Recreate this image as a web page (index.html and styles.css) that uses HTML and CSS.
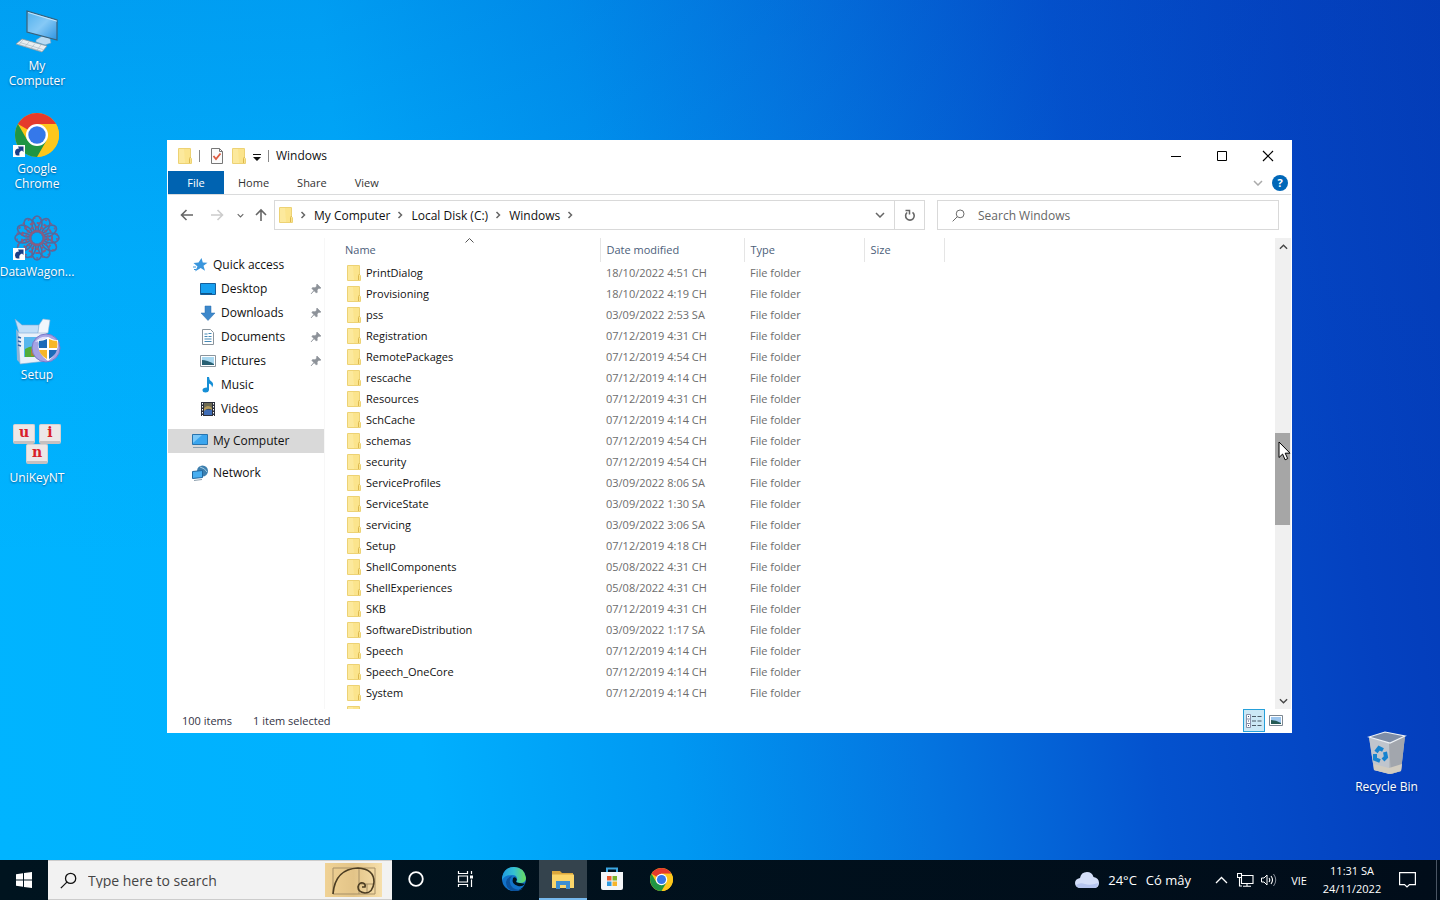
FILE: index.html
```html
<!DOCTYPE html>
<html lang="vi">
<head>
    <meta charset="utf-8" />
    <title>Windows</title>
    <link rel="stylesheet" href="styles.css">
</head>
<body>
    <!-- shared icons -->
    <svg class="sprite" aria-hidden="true">
        <symbol id="folder" viewBox="0 0 14 16">
            <path d="M1 1h12v14H1z" fill="#fbe48c" />
            <path d="M1 1h5l1 14H1z" fill="#fdeca8" opacity=".6" />
            <path d="M.5 .5h12v9l1 1v5H.5z" fill="none" stroke="#edd274" />
            <path d="M11.500 15v-4.500l1-1.500" fill="none" stroke="#dcb84e" />
        </symbol>
        <symbol id="chrome" viewBox="0 0 44 44">
            <circle cx="22" cy="22" r="22" fill="#ffc61a" />
            <path d="M22 22L2.950 11A22 22 0 0 1 41.050 11H22z" fill="#e53a2c" />
            <path d="M22 11H41.050A22 22 0 0 1 22 44L31.500 27.500z" fill="#fdc71c" />
            <path d="M2.950 11A22 22 0 0 0 22 44L31.500 27.500H12.500z" fill="#1f9543" />
            <circle cx="22" cy="22" r="11" fill="#fff" />
            <circle cx="22" cy="22" r="8.700" fill="#3578ea" />
        </symbol>
        <symbol id="shortcut" viewBox="0 0 12 12">
            <path d="M0 0h12v12H0z" fill="#fff" />
            <path d="M2 7.500Q2 3.500 6 3.500L5 1.500h5.500V7L9 5.500Q5.500 6.500 6.500 10.500H4.500Q2 10 2 7.500z" fill="#1d3f86" />
        </symbol>
        <symbol id="pin" viewBox="0 0 12 12">
            <path d="M7 1l4 4-1.200.4-.9-.2-1.800 1.800.2 2.200-.9.900-2.500-2.500L1 11l3-3.300L1.800 5.400l.9-.8 2.300.200L6.800 3l-.300-.9z" fill="#8d9299" stroke="#8d9299" stroke-width=".6" />
        </symbol>
        <symbol id="right" viewBox="0 0 6 8">
            <path d="M1.500 1l3 3-3 3" fill="none" stroke="#666" stroke-width="1.500" />
        </symbol>
        <symbol id="down" viewBox="0 0 10 6">
            <path d="M1 1l4 4 4-4" fill="none" stroke="currentColor" stroke-width="1.500" />
        </symbol>
        <symbol id="loupe" viewBox="0 0 16 16">
            <circle cx="10" cy="6" r="4.800" fill="none" stroke="currentColor" stroke-width="1.200" />
            <path d="M6.500 9.500L.8 15.200" stroke="currentColor" stroke-width="1.200" />
        </symbol>
    </svg>

    <main class="desktop">
        <div class="icons">
            <a class="icon" href="#">
                <span class="pic">
                    <svg width="44" height="44" viewBox="0 0 44 44">
                        <defs>
                            <linearGradient id="screen" x1="0" y1="0" x2="1" y2="1">
                                <stop offset="0" stop-color="#4fb0ee" />
                                <stop offset=".5" stop-color="#86c9f6" />
                                <stop offset="1" stop-color="#2c93e0" />
                            </linearGradient>
                        </defs>
                        <path d="M21 30l6-4 8 2 1 5-6 2-9-3z" fill="#b9dbf2" stroke="#6a9ac0" stroke-width=".6" />
                        <path d="M12 1l30 9v20l-30-8z" fill="url(#screen)" stroke="#3b6078" stroke-width="1.200" />
                        <path d="M13 2.500l29 8.700" stroke="#dff1fc" stroke-width=".8" />
                        <path d="M1 34l6-5 25 7-5 6z" fill="#e9eef1" stroke="#8c98a0" stroke-width=".8" />
                        <path d="M5 32.500l23 7M4 34.500l22 6.500M8 30l-4 4.500M14 32l-4 4.500M20 33.500l-4 5M26 35l-4 5" stroke="#a5b3bd" stroke-width=".6" />
                    </svg>
                </span>
                <span class="label">My<br>Computer</span>
            </a>
            <a class="icon" href="#">
                <span class="pic">
                    <svg width="44" height="44"><use href="#chrome" /></svg>
                    <svg class="arrow" width="12" height="12"><use href="#shortcut" /></svg>
                </span>
                <span class="label">Google<br>Chrome</span>
            </a>
            <a class="icon" href="#">
                <span class="pic">
                    <svg width="46" height="46" viewBox="-23 -23 46 46">
                        <g fill="none" stroke="#55689c" stroke-width="1.600">
                            <g id="petals">
                                <ellipse cx="0" cy="-14" rx="5" ry="8" />
                                <ellipse cx="14" cy="0" rx="8" ry="5" />
                                <ellipse cx="0" cy="14" rx="5" ry="8" />
                                <ellipse cx="-14" cy="0" rx="8" ry="5" />
                            </g>
                            <use href="#petals" transform="rotate(30)" />
                            <use href="#petals" transform="rotate(60)" />
                            <circle r="7" stroke="#8a5c80" stroke-width="2" />
                            <circle r="11" stroke="#8a5c80" stroke-width="2" stroke-dasharray="3 2" />
                            <circle r="15" stroke="#8a5c80" stroke-width="2" stroke-dasharray="4 3" />
                            <circle r="20" stroke="#8b5a80" stroke-dasharray="2 4" />
                        </g>
                    </svg>
                    <svg class="arrow" width="12" height="12"><use href="#shortcut" /></svg>
                </span>
                <span class="label">DataWagon...</span>
            </a>
            <a class="icon" href="#">
                <span class="pic">
                    <svg width="48" height="48" viewBox="0 0 48 48">
                        <path d="M3 12l4 5v29l-3-3z" fill="#8fb4d8" />
                        <path d="M5 15h27l4 4-2 25-27 3z" fill="#e9f1fa" stroke="#83a9d0" stroke-width=".6" />
                        <path d="M2 2l7 6h17l-1 8H6z" fill="#c2def8" stroke="#7aa6d4" stroke-width=".6" />
                        <path d="M26 8l4-6 7 1-2 13-10 0z" fill="#f2f6fc" stroke="#98b3d2" stroke-width=".6" />
                        <path d="M11 20h14v20H11z" fill="#58b7ee" />
                        <path d="M12 32q6-4 13-2v10H12z" fill="#52ad3a" />
                        <path d="M18 32h7v7h-7z" fill="#e66a2c" opacity=".6" />
                        <path d="M5 20l3 1M5 24l3 1M5 28l3 1" stroke="#2c64b0" stroke-width="1.500" />
                        <circle cx="33" cy="31" r="14" fill="#a6a3e4" stroke="#7b79c8" />
                        <path d="M22 25q9-10 20-1-9-2-20 1z" fill="#e3e1fb" />
                        <path d="M35 20q5 4 10 3 1 14-10 21-11-7-10-21 5 1 10-3z" fill="#fff" />
                        <path d="M34 22v9h-8q-1-4 0-7 4 0 8-2z" fill="#1c6ab8" />
                        <path d="M36 22v9h8q1-4 0-7-4 0-8-2z" fill="#f7b628" />
                        <path d="M34 33h-8q2 6 8 9z" fill="#f7b628" />
                        <path d="M36 33h8q-2 6-8 9z" fill="#1c6ab8" />
                    </svg>
                </span>
                <span class="label">Setup</span>
            </a>
            <a class="icon" href="#">
                <span class="pic">
                    <span class="keys">
                        <span class="key">u</span><span class="key">i</span><span class="key">n</span>
                    </span>
                </span>
                <span class="label">UniKeyNT</span>
            </a>
        </div>

        <a class="icon bin" href="#">
            <span class="pic">
                <svg width="40" height="44" viewBox="0 0 40 44">
                    <path d="M2 6L20 10 38 5 34 40 24 43 7 39z" fill="#b4b8be" />
                    <path d="M2 6l20 6v31L7 39z" fill="#c0c5cd" />
                    <path d="M22 12L38 5l-4 35-10 3z" fill="#a2a6ad" />
                    <path d="M7 33l15 4 13-4-1 7-11 3-16-4z" fill="#d2ccc0" />
                    <path d="M2 6L18 1l20 4-15 7z" fill="#7e8da6" stroke="#eef1f5" stroke-width="1.200" />
                    <g fill="none" stroke="#1683cf" stroke-width="4">
                        <path d="M9 21l3-4 4 2" />
                        <path d="M18 21l1 5-3 3" />
                        <path d="M13 30l-5-2v-5" />
                    </g>
                </svg>
            </span>
            <span class="label">Recycle Bin</span>
        </a>

        <section class="window">
            <header class="titlebar">
                <svg width="14" height="16"><use href="#folder" /></svg>
                <span class="sep"></span>
                <button class="quick" aria-label="Properties">
                    <svg width="12" height="16" viewBox="0 0 12 16">
                        <path d="M.5 .5h8l3 3v12H.5z" fill="#fbfbfb" stroke="#777" />
                        <path d="M8.500 .5v3h3" fill="none" stroke="#777" />
                        <path d="M2.500 8l2.500 3L9.500 5.500" fill="none" stroke="#dd5b41" stroke-width="1.800" />
                    </svg>
                </button>
                <button class="quick" aria-label="New folder">
                    <svg width="14" height="16"><use href="#folder" /></svg>
                </button>
                <button class="more" aria-label="Customize">
                    <svg width="8" height="7" viewBox="0 0 8 7">
                        <path d="M0 0h8v1H0zM0 3h8L4 7z" fill="#111" />
                    </svg>
                </button>
                <span class="sep"></span>
                <h1>Windows</h1>
                <div class="controls">
                    <button aria-label="Minimize"><svg width="10" height="10" viewBox="0 0 10 10"><path d="M0 5.500h10" stroke="#000" /></svg></button>
                    <button aria-label="Maximize"><svg width="10" height="10" viewBox="0 0 10 10"><path d="M.5 .5h9v9h-9z" fill="none" stroke="#000" /></svg></button>
                    <button aria-label="Close"><svg width="12" height="12" viewBox="0 0 12 12"><path d="M1 1l10 10M11 1L1 11" stroke="#000" stroke-width="1.200" /></svg></button>
                </div>
            </header>

            <div class="ribbon">
                <button class="file">File</button>
                <button>Home</button>
                <button>Share</button>
                <button>View</button>
                <div class="help">
                    <button aria-label="Expand ribbon"><svg width="10" height="6"><use href="#down" /></svg></button>
                    <button class="ask" aria-label="Help">?</button>
                </div>
            </div>

            <div class="address">
                <div class="arrows">
                    <button aria-label="Back"><svg width="14" height="12" viewBox="0 0 14 12"><path d="M13 6H2M6.500 1L1.500 6l5 5" fill="none" stroke="#666" stroke-width="1.600" /></svg></button>
                    <button aria-label="Forward"><svg width="14" height="12" viewBox="0 0 14 12"><path d="M1 6h11M7.500 1l5 5-5 5" fill="none" stroke="#ccc" stroke-width="1.600" /></svg></button>
                    <button class="recent" aria-label="Recent"><svg width="7" height="5"><use href="#down" /></svg></button>
                    <button aria-label="Up"><svg width="12" height="14" viewBox="0 0 12 14"><path d="M6 13V2M1 7l5-5 5 5" fill="none" stroke="#666" stroke-width="1.600" /></svg></button>
                </div>
                <div class="path">
                    <svg width="14" height="16"><use href="#folder" /></svg>
                    <svg class="gt" width="6" height="8"><use href="#right" /></svg>
                    <a href="#">My Computer</a>
                    <svg class="gt" width="6" height="8"><use href="#right" /></svg>
                    <a href="#">Local Disk (C:)</a>
                    <svg class="gt" width="6" height="8"><use href="#right" /></svg>
                    <a href="#">Windows</a>
                    <svg class="gt" width="6" height="8"><use href="#right" /></svg>
                    <button class="history" aria-label="Previous locations"><svg width="10" height="6"><use href="#down" /></svg></button>
                </div>
                <button class="refresh" aria-label="Refresh">
                    <svg width="12" height="13" viewBox="0 0 12 13">
                        <path d="M3.200 3.500A4.300 4.300 0 1 0 8.500 3.400" fill="none" stroke="#666" stroke-width="1.600" />
                        <path d="M1.500 1.500h4v4" fill="none" stroke="#666" stroke-width="1.500" />
                    </svg>
                </button>
                <label class="find">
                    <svg width="13" height="13"><use href="#loupe" /></svg>
                    <input type="text" placeholder="Search Windows" aria-label="Search Windows" />
                </label>
            </div>

            <div class="content">
                <nav class="side">
                    <a class="top" href="#">
                        <svg width="16" height="16" viewBox="0 0 16 16"><path d="M9.500 1l1.300 4.600 4.700.2-4 3 1.500 5L8.700 11 3 14.500l2.500-5L1.500 6l5-.4z" fill="#3a96dd" /><path d="M1 10h3M2 12.500h2" stroke="#3a96dd" /></svg>
                        Quick access
                    </a>
                    <a href="#">
                        <svg width="16" height="16" viewBox="0 0 16 16"><path d="M.5 2.500h15v11H.5z" fill="#17a0f0" stroke="#155f9c" /><path d="M1 12.500h11" stroke="#0e5488" /></svg>
                        Desktop
                        <svg class="pin" width="12" height="12"><use href="#pin" /></svg>
                    </a>
                    <a href="#">
                        <svg width="16" height="16" viewBox="0 0 16 16"><path d="M5 1h6v7h4l-7 7.500L1 8h4z" fill="#3d88cb" stroke="#2a6fae" stroke-width=".5" /></svg>
                        Downloads
                        <svg class="pin" width="12" height="12"><use href="#pin" /></svg>
                    </a>
                    <a href="#">
                        <svg width="16" height="16" viewBox="0 0 16 16"><path d="M2.500 .5h8l3 3v12h-11z" fill="#fff" stroke="#8a949c" /><path d="M4.500 5h3M8.500 4.500h3M4.500 7.500h3M8.500 7.500h3M4.500 10h7M4.500 12.500h7" stroke="#4689b5" stroke-width="1.200" /></svg>
                        Documents
                        <svg class="pin" width="12" height="12"><use href="#pin" /></svg>
                    </a>
                    <a href="#">
                        <svg width="16" height="16" viewBox="0 0 16 16"><path d="M.5 2.500h15v11H.5z" fill="#fff" stroke="#8a949c" /><path d="M2 4h12v8H2z" fill="#a9d8f0" /><path d="M2 7q5 0 12 4v1H2z" fill="#285f72" /></svg>
                        Pictures
                        <svg class="pin" width="12" height="12"><use href="#pin" /></svg>
                    </a>
                    <a href="#">
                        <svg width="16" height="16" viewBox="0 0 16 16"><path d="M7 0h2q0 3 2.500 4.500 3 2.500.5 6 0-3-3-4V13q-.5 2.500-3.500 2.500T2.500 13 7 10.500z" fill="#168fd6" /></svg>
                        Music
                    </a>
                    <a href="#">
                        <svg width="16" height="16" viewBox="0 0 16 16"><path d="M1 1h14v14H1z" fill="#2b2f3b" /><path d="M4 2h8v6H4z" fill="#6c6a54" /><path d="M4 8.500h8V14H4z" fill="#3f6cb5" /><path d="M4 7q4-4 8 0v2q-4-3-8 1z" fill="#b39a5c" /><path d="M2.500 2v13M13.500 2v13" stroke="#fff" stroke-dasharray="1.500 1.500" /></svg>
                        Videos
                    </a>
                    <a class="top gap selected" href="#">
                        <svg width="16" height="16" viewBox="0 0 16 16"><path d="M.5 1.500h15v10H.5z" fill="#3aa5ee" stroke="#2873ad" /><path d="M1 2h9L1 10z" fill="#7cc8f8" /><path d="M1 14.500h14" stroke="#8da0ae" /></svg>
                        My Computer
                    </a>
                    <a class="top gap" href="#">
                        <svg width="16" height="16" viewBox="0 0 16 16"><circle cx="10.500" cy="6" r="5.500" fill="#3d7fae" /><path d="M8 2q5 1 7 5" fill="none" stroke="#a5cde4" /><path d="M.5 6.500l10-1v7l-10 1z" fill="#48aef0" stroke="#21679f" /><path d="M2 15.500l8-1" stroke="#8da0ae" /></svg>
                        Network
                    </a>
                </nav>

                <div class="list">
                    <svg class="sorted" width="9" height="5" viewBox="0 0 9 5"><path d="M.5 4.500l4-4 4 4" fill="none" stroke="#555" /></svg>
                    <table>
                        <thead>
                            <tr>
                                <th class="c-name">Name</th>
                                <th class="c-date">Date modified</th>
                                <th class="c-type">Type</th>
                                <th class="c-size">Size</th>
                                <th></th>
                            </tr>
                        </thead>
                        <tbody id="rows"></tbody>
                    </table>
                </div>

                <div class="scroll">
                    <button aria-label="Scroll up"><svg class="flip" width="9" height="6"><use href="#down" /></svg></button>
                    <span class="before"></span>
                    <span class="thumb">
                        <svg class="cursor" width="13" height="20" viewBox="0 0 13 20"><path d="M1 1v15.500l3.600-3.400 2.500 5.700 2.600-1.200-2.500-5.400H12z" fill="#fff" stroke="#000" /></svg>
                    </span>
                    <span class="after"></span>
                    <button aria-label="Scroll down"><svg width="9" height="6"><use href="#down" /></svg></button>
                </div>
            </div>

            <footer class="status">
                <span>100 items</span>
                <span>1 item selected</span>
                <div class="views">
                    <button class="on" aria-label="Details">
                        <svg width="16" height="14" viewBox="0 0 16 14"><path d="M.5 .5h4v13h-4zM.5 5h4M.5 9.500h4" fill="#fff" stroke="#8a8fa8" /><path d="M6 2.500h4M11.500 2.500h4M6 7h4M11.500 7h4M6 11.500h4M11.500 11.500h4" stroke="#4b5a66" /><path d="M2 2.500h1M2 7h1M2 11.500h1" stroke="#357" /></svg>
                    </button>
                    <button aria-label="Large icons">
                        <svg width="14" height="12" viewBox="0 0 14 12"><path d="M.5 .5h13v10H.5z" fill="#fff" stroke="#7c8791" /><path d="M2 2h10v7H2z" fill="#9cc6ee" /><path d="M2 5q5 0 10 3v1H2z" fill="#245a55" /></svg>
                    </button>
                </div>
            </footer>
        </section>
    </main>

    <footer class="taskbar">
        <button class="start" aria-label="Start">
            <svg width="16" height="16" viewBox="0 0 16 16"><path d="M0 2.200l7-1v6.300H0zM8 1l8-1v7.500H8zM0 8.500h7v6.300l-7-1zM8 8.500h8V16l-8-1z" fill="#fff" /></svg>
        </button>
        <label class="search">
            <svg width="17" height="17"><use href="#loupe" /></svg>
            <input type="text" placeholder="Type here to search" aria-label="Type here to search" />
            <svg width="57" height="34" viewBox="0 0 57 34">
                <defs><linearGradient id="paper" x1="0" y1="0" x2="1" y2="0"><stop offset="0" stop-color="#f0d295" /><stop offset=".5" stop-color="#e3c488" /><stop offset="1" stop-color="#f6dfab" /></linearGradient></defs>
                <path d="M0 0h57v34H0z" fill="url(#paper)" />
                <path d="M8 5h42v26H8zM34 5v26M34 21h16M42 21v10" fill="none" stroke="#a68f66" />
                <path d="M8 31Q10 6 33 5q16 1 16 14-1 11-9 11-7-1-7-6 1-5 5-4 3 1 2 4h-3" fill="none" stroke="#4c3d22" stroke-width="1.600" />
            </svg>
        </label>
        <div class="apps">
            <button aria-label="Cortana"><svg width="16" height="16" viewBox="0 0 16 16"><circle cx="8" cy="8" r="6.800" fill="none" stroke="#fff" stroke-width="1.800" /></svg></button>
            <button aria-label="Task view"><svg width="17" height="16" viewBox="0 0 17 16"><path d="M1.500 0v2.500h9V0M1.500 16v-2.500h9V16M1.500 5h9v6h-9zM14.500 0v3M14.500 8.500V16" fill="none" stroke="#fff" stroke-width="1.200" /><path d="M13 4.500h3v3h-3z" fill="#fff" /></svg></button>
            <button aria-label="Edge">
                <svg width="24" height="24" viewBox="0 0 24 24">
                    <defs><linearGradient id="edge" x1="0" y1="0" x2="1" y2="0"><stop offset="0" stop-color="#1e9be0" /><stop offset=".5" stop-color="#35c1d3" /><stop offset="1" stop-color="#6bdc58" /></linearGradient></defs>
                    <circle cx="12" cy="12" r="12" fill="#1273c9" />
                    <path d="M0 11Q2 0 12 0t12 11q0 5-6 5-4 0-3-2 1-6-5-6Q3 8 0 13z" fill="url(#edge)" />
                    <path d="M10 9q-5 6 1 12 5 3 10 .5-4 3.500-10 2.500Q4 22 4 15q1-5 6-6z" fill="#0c529c" />
                    <path d="M11 11q-2 6 5 8 4 1 7-2l1 0Q19 16 15 15.500q-2-1 0-2.500-1-4-4-2z" fill="#00141f" />
                </svg>
            </button>
            <button class="active" aria-label="File Explorer">
                <svg width="22" height="19" viewBox="0 0 22 19"><path d="M0 1h8l2 2h11v15H0z" fill="#dca83c" /><path d="M0 4.500h22V18H0z" fill="#fbd66a" /><path d="M4 11h14v8h-4v-4H8v4H4z" fill="#3d8fd1" /></svg>
            </button>
            <button aria-label="Store">
                <svg width="24" height="24" viewBox="0 0 24 24"><path d="M7 6V1.500h10V6" fill="none" stroke="#3ba7e3" stroke-width="2" /><path d="M1 5h22v16q0 2-2 2H3q-2 0-2-2z" fill="#f4f6f8" /><path d="M7 9h4.500v4.500H7z" fill="#ec5b2f" /><path d="M12.500 9H17v4.500h-4.500z" fill="#7bb42a" /><path d="M7 14.500h4.500V19H7z" fill="#2f9be0" /><path d="M12.500 14.500H17V19h-4.500z" fill="#f7b52a" /></svg>
            </button>
            <button aria-label="Chrome"><svg width="23" height="23"><use href="#chrome" /></svg></button>
        </div>
        <div class="tray">
            <button class="weather">
                <svg width="24" height="16" viewBox="0 0 24 16"><path d="M6 16q-6 0-6-5 0-4 5-5 1-6 7-6 5 0 6.500 5Q24 6 24 11q0 5-5 5z" fill="#d3def8" /><path d="M1 13q4-3 9-1t13-1q0 5-4 5H6q-4 0-5-3z" fill="#b5c5ef" /></svg>
                <span>24°C</span>
                <span>Có mây</span>
            </button>
            <button class="small" aria-label="Hidden icons"><svg width="13" height="8" viewBox="0 0 13 8"><path d="M1 7l5.500-5.500L12 7" fill="none" stroke="#fff" stroke-width="1.300" /></svg></button>
            <button class="small" aria-label="Network"><svg width="17" height="14" viewBox="0 0 17 14"><path d="M5 2.500h11v8H4.500V5M10 10.500V13M6 13.200h8M.5 .5h4v4h-4zM2.500 4.500V13H5" fill="none" stroke="#fff" stroke-width="1.100" /></svg></button>
            <button class="small" aria-label="Volume"><svg width="16" height="14" viewBox="0 0 16 14"><path d="M.5 5h2.500l3-3v10l-3-3H.500z" fill="none" stroke="#fff" /><path d="M8 5q1.500 2 0 4M10 3q3 4 0 8" fill="none" stroke="#fff" stroke-width="1.100" /><path d="M12.500 1q4.500 6 0 12" fill="none" stroke="#8b929c" /></svg></button>
            <button class="lang">VIE</button>
            <button class="clock"><span>11:31 SA</span><span>24/11/2022</span></button>
            <button class="notes" aria-label="Notifications"><svg width="17" height="16" viewBox="0 0 17 16"><path d="M.6 .6h15.800v12H10.500L8 15l-2.500-2.400H.6z" fill="none" stroke="#fff" stroke-width="1.200" /></svg></button>
        </div>
    </footer>
    <script src="script.js"></script>
</body>
</html>
```
FILE: styles.css
```css
* {
    box-sizing: border-box;
}

body {
    margin: 0;
    height: 100vh;
    display: flex;
    flex-direction: column;
    overflow: hidden;
    font: 12px/15px "Open Sans", "Noto Sans", sans-serif;
    color: #111;
}

a {
    color: inherit;
    text-decoration: none;
}

button {
    display: flex;
    align-items: center;
    justify-content: center;
    padding: 0;
    border: 0;
    background: none;
    font: inherit;
    color: inherit;
}

input {
    flex: 1;
    min-width: 0;
    padding: 0;
    border: 0;
    outline: 0;
    background: none;
    font: inherit;
    color: inherit;
}

svg {
    flex: none;
}

.sprite {
    position: absolute;
    width: 0;
    height: 0;
}

/* desktop */
.desktop {
    position: relative;
    flex: 1;
    min-height: 0;
    background:
        linear-gradient(to bottom, rgba(0, 70, 185, 0.18), rgba(0, 90, 200, 0.08) 30%, rgba(0, 90, 200, 0) 65%),
        linear-gradient(82deg, #00b4ff 0%, #00b0fe 28%, #0098f2 44%, #0475e0 60%, #0452ce 75%, #0441c0 90%, #043ab6 100%);
}

.icons {
    display: flex;
    flex-direction: column;
    width: 74px;
    padding-top: 8px;
}

.icon {
    display: flex;
    flex-direction: column;
    align-items: center;
    height: 103px;
    color: #fff;
    text-align: center;
    text-shadow: 0 1px 2px rgba(0, 30, 80, 0.6);
}

.pic {
    position: relative;
    display: flex;
    align-items: center;
    justify-content: center;
    width: 48px;
    height: 48px;
    margin-bottom: 2px;
}

.arrow {
    position: absolute;
    left: 0;
    bottom: 2px;
}

.keys {
    display: flex;
    flex-wrap: wrap;
    justify-content: center;
    gap: 0 4px;
    width: 48px;
}

.key {
    width: 22px;
    height: 20px;
    border: 1px solid #d6d1d1;
    border-bottom: 3px solid #c6c0c0;
    border-radius: 2px;
    background: #ece7e7;
    color: #d8202a;
    font: bold 14px/15px "DejaVu Serif", serif;
    text-shadow: none;
}

.bin {
    position: absolute;
    right: 16px;
    bottom: 28px;
    width: 75px;
}

/* explorer window */
.window {
    position: absolute;
    top: 140px;
    right: 148px;
    bottom: 127px;
    left: 167px;
    display: flex;
    flex-direction: column;
    padding: 0 1px;
    background: #fff;
}

.titlebar {
    display: flex;
    align-items: center;
    height: 31px;
    padding-left: 10px;
}

.titlebar .sep {
    width: 1px;
    height: 12px;
    margin: 0 7px;
    background: #888;
}

.quick {
    width: 14px;
    margin-left: 3px;
}

.quick + .quick {
    margin-left: 8px;
}

.more {
    width: 8px;
    margin-left: 7px;
    padding-top: 3px;
}

.titlebar h1 {
    margin: 0;
    font-size: 12px;
    font-weight: normal;
}

.controls {
    display: flex;
    align-self: stretch;
    margin-left: auto;
}

.controls button {
    width: 46px;
}

.ribbon {
    display: flex;
    height: 24px;
    border-bottom: 1px solid #dadbdc;
    color: #333;
    font-size: 11px;
}

.ribbon > button {
    padding: 0 14px;
}

.ribbon .file {
    width: 56px;
    background: #0063b1;
    color: #fff;
}

.help {
    display: flex;
    align-items: center;
    gap: 9px;
    margin-left: auto;
    padding-right: 3px;
    color: #aaa;
}

.ask {
    width: 16px;
    height: 16px;
    border-radius: 50%;
    background: #0067b8;
    color: #fff;
    font-weight: bold;
}

.address {
    display: flex;
    height: 43px;
    padding: 5px 12px 8px 0;
    color: #666;
}

.arrows {
    display: flex;
    width: 106px;
    padding-left: 4px;
}

.arrows button {
    width: 30px;
}

.arrows .recent {
    width: 16px;
}

.arrows button:last-child {
    width: 26px;
}

.path {
    display: flex;
    flex: 1;
    align-items: center;
    padding-left: 4px;
    border: 1px solid #d9d9d9;
    color: #111;
}

.path .gt {
    margin: 0 8px 0 7px;
}

.history {
    width: 28px;
    margin-left: auto;
    color: #666;
}

.refresh {
    width: 30px;
    border: 1px solid #d9d9d9;
    border-left: 0;
}

.find {
    display: flex;
    align-items: center;
    gap: 13px;
    width: 342px;
    margin-left: 12px;
    padding-left: 14px;
    border: 1px solid #d9d9d9;
}

.find input::placeholder {
    color: #666;
    opacity: 1;
}

.content {
    display: flex;
    flex: 1;
    min-height: 0;
}

.side {
    width: 157px;
    padding-top: 15px;
    border-right: 1px solid #f7f7f7;
}

.side a {
    display: flex;
    align-items: center;
    gap: 5px;
    height: 24px;
    padding: 0 2px 1px 32px;
}

.side .top {
    padding-left: 24px;
}

.side .gap {
    margin-top: 8px;
}

.side .selected {
    background: #d9d9d9;
}

.side .pin {
    margin-left: auto;
}

.list {
    position: relative;
    flex: 1;
    overflow: hidden;
}

.sorted {
    position: absolute;
    top: 0;
    left: 140px;
}

table {
    width: 100%;
    table-layout: fixed;
    border-collapse: collapse;
    font-size: 11px;
}

th,
td {
    height: 21px;
    padding: 0 0 0 6px;
    text-align: left;
    font-weight: normal;
    white-space: nowrap;
    color: #6d6d6d;
}

th {
    height: 24px;
    padding-bottom: 1px;
    border-right: 1px solid #e5e5e5;
    color: #4c607a;
}

th:last-child {
    border-right: 0;
}

.c-name {
    width: 275px;
    padding-left: 20px;
}

.c-date {
    width: 144px;
}

.c-type {
    width: 120px;
}

.c-size {
    width: 80px;
}

.name {
    display: flex;
    align-items: center;
    gap: 5px;
    padding-left: 22px;
    color: #111;
}

.scroll {
    display: flex;
    flex-direction: column;
    width: 16px;
    background: #f0f0f0;
    color: #444;
}

.scroll button {
    height: 17px;
}

.flip {
    transform: rotate(180deg);
}

.before {
    flex: 178;
}

.thumb {
    position: relative;
    flex: 92;
    width: 15px;
    background: #a6a6a6;
}

.after {
    flex: 167;
}

.cursor {
    position: absolute;
    top: 8px;
    left: 3px;
}

.status {
    display: flex;
    align-items: center;
    gap: 21px;
    height: 24px;
    padding: 0 8px 1px 14px;
    color: #334;
    font-size: 11px;
}

.views {
    display: flex;
    gap: 4px;
    margin-left: auto;
}

.views button {
    height: 23px;
}

.views .on {
    width: 22px;
    border: 1px solid #26a0da;
    background: #cce8f5;
}

/* taskbar */
.taskbar {
    display: flex;
    height: 40px;
    background: linear-gradient(to right, #00141f, #010d1a);
    color: #fff;
}

.start {
    width: 48px;
}

.search {
    display: flex;
    align-items: center;
    gap: 11px;
    width: 344px;
    padding: 0 10px 0 12px;
    border: 1px solid #ccc;
    border-width: 1px 0;
    background: #f2f2f2;
    color: #111;
    font-size: 14px;
}

.search input::placeholder {
    color: #444;
    opacity: 1;
}

.apps {
    display: flex;
    gap: 1px;
}

.apps button {
    width: 48px;
    border-bottom: 2px solid transparent;
}

.apps .active {
    border-color: #76b9ed;
    background: #34434d;
}

.tray {
    display: flex;
    margin: 0 3px 0 auto;
    padding-right: 9px;
    border-right: 1px solid #4a5563;
}

.weather {
    gap: 9px;
    margin-right: 18px;
    font-size: 13px;
}

.small {
    width: 24px;
}

.lang {
    width: 36px;
    font-size: 11px;
}

.clock {
    flex-direction: column;
    width: 70px;
    font-size: 11px;
    line-height: 18px;
}

.notes {
    width: 40px;
}
```
FILE: script.js
```js
var folders = [
    ['PrintDialog', '18/10/2022 4:51 CH'],
    ['Provisioning', '18/10/2022 4:19 CH'],
    ['pss', '03/09/2022 2:53 SA'],
    ['Registration', '07/12/2019 4:31 CH'],
    ['RemotePackages', '07/12/2019 4:54 CH'],
    ['rescache', '07/12/2019 4:14 CH'],
    ['Resources', '07/12/2019 4:31 CH'],
    ['SchCache', '07/12/2019 4:14 CH'],
    ['schemas', '07/12/2019 4:54 CH'],
    ['security', '07/12/2019 4:54 CH'],
    ['ServiceProfiles', '03/09/2022 8:06 SA'],
    ['ServiceState', '03/09/2022 1:30 SA'],
    ['servicing', '03/09/2022 3:06 SA'],
    ['Setup', '07/12/2019 4:18 CH'],
    ['ShellComponents', '05/08/2022 4:31 CH'],
    ['ShellExperiences', '05/08/2022 4:31 CH'],
    ['SKB', '07/12/2019 4:31 CH'],
    ['SoftwareDistribution', '03/09/2022 1:17 SA'],
    ['Speech', '07/12/2019 4:14 CH'],
    ['Speech_OneCore', '07/12/2019 4:14 CH'],
    ['System', '07/12/2019 4:14 CH'],
    ['', '']
];

var html = '';
for (var i = 0; i < folders.length; i++) {
    var type = folders[i][0] ? 'File folder' : '';
    html += `<tr>
        <td class="name"><svg width="14" height="16"><use href="#folder" /></svg>${folders[i][0]}</td>
        <td>${folders[i][1]}</td>
        <td>${type}</td>
        <td></td>
        <td></td>
    </tr>`;
}
document.getElementById('rows').innerHTML = html;
```
